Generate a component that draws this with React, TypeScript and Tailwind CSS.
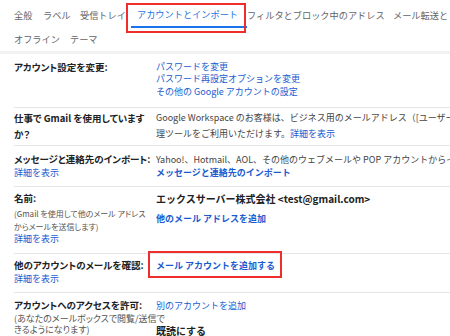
import React from "react";

const link = "text-[#1a5bd0]";
const palt = "[font-feature-settings:'palt']";

function Row({
  h,
  children,
  last,
}: {
  h: string;
  children: React.ReactNode;
  last?: boolean;
}) {
  return (
    <div className={`flex ${h} ${last ? "" : "border-b border-[#e6e6e6]"}`}>
      {children}
    </div>
  );
}

export default function App() {
  return (
    <div className="w-[450px] h-[336px] overflow-hidden bg-white font-['Noto_Sans_CJK_JP',sans-serif] text-[#202124]">
      {/* Tabs row 1 */}
      <div className="flex h-[28px] pl-[14px] text-[9.2px] text-[#5f6368] whitespace-nowrap">
        <div className="w-[29px] shrink-0 flex items-center pt-[4px]">全般</div>
        <div className="w-[37px] shrink-0 flex items-center pt-[4px]">ラベル</div>
        <div className="w-[51px] shrink-0 flex items-center pt-[4px]">受信トレイ</div>
        <div className="relative w-[116px] shrink-0 flex items-center pt-[4px] pl-[6px] border-b-2 border-[#1a73e8] text-[#1a73e8]">
          アカウントとインポート
          <div className="absolute left-[-5px] top-[3px] w-[120px] h-[30px] border-2 border-[#ee2d2d]" />
        </div>
        <div className="w-[146px] shrink-0 flex items-center pt-[4px]">フィルタとブロック中のアドレス</div>
        <div className="shrink-0 flex items-center pt-[4px]">メール転送と POP/IMAP</div>
      </div>
      {/* Tabs row 2 */}
      <div className="flex h-[23px] pl-[14px] items-center text-[9.2px] text-[#5f6368] whitespace-nowrap">
        <div className="w-[56px] shrink-0">オフライン</div>
        <div>テーマ</div>
      </div>
      <div className="h-[3px] bg-[#f2f2f2]" />

      {/* Settings */}
      <div className="ml-[14px] text-[9px]">
        <Row h="h-[54px]">
          <div className={`w-[142px] shrink-0 pt-[6.5px] leading-[13px] font-bold text-[9.5px] ${palt}`}>
            アカウント設定を変更:
          </div>
          <div className={`flex-1 min-w-0 pt-[6.5px] leading-[12.5px] ${link}`}>
            <div>パスワードを変更</div>
            <div>パスワード再設定オプションを変更</div>
            <div>その他の Google アカウントの設定</div>
          </div>
        </Row>
        <Row h="h-[38px]">
          <div className={`w-[142px] shrink-0 pt-[2px] leading-[16px] font-bold text-[9.5px] ${palt}`}>
            仕事で Gmail を使用していますか？
          </div>
          <div className="flex-1 min-w-0 pt-[2px] leading-[16px] text-[#444] whitespace-nowrap overflow-hidden">
            <div>
              Google Workspace のお客様は、ビジネス用のメールアドレス（[ユーザー名]@[ドメイン名]）、大容量のストレージ、管
            </div>
            <div>
              理ツールをご利用いただけます。<span className={link}>詳細を表示</span>
            </div>
          </div>
        </Row>
        <Row h="h-[41px]">
          <div className="w-[142px] shrink-0 pt-[6.5px] leading-[13px]">
            <div className={`font-bold whitespace-nowrap text-[9.5px] ${palt}`}>メッセージと連絡先のインポート:</div>
            <div className={link}>詳細を表示</div>
          </div>
          <div className="flex-1 min-w-0 pt-[6.5px] leading-[13px] text-[#444] whitespace-nowrap overflow-hidden">
            <div>Yahoo!、Hotmail、AOL、その他のウェブメールや POP アカウントからインポートします。</div>
            <div className={`font-bold ${link}`}>メッセージと連絡先のインポート</div>
          </div>
        </Row>
        <Row h="h-[67px]">
          <div className="w-[142px] shrink-0 pt-[4.5px]">
            <div className={`font-bold leading-[13px] text-[9.5px] ${palt}`}>名前:</div>
            <div className={`mt-[2px] text-[8px] leading-[13px] text-[#555] whitespace-nowrap ${palt}`}>
              (Gmail を使用して他のメール アドレス
              <br />
              からメールを送信します)
            </div>
            <div className={`leading-[12px] ${link}`}>詳細を表示</div>
          </div>
          <div className="flex-1 min-w-0 pt-[4.5px] whitespace-nowrap overflow-hidden">
            <div className="font-bold leading-[13px] text-[10px] text-[#202124]">
              エックスサーバー株式会社 &lt;test@gmail.com&gt;
            </div>
            <div className={`mt-[7px] font-bold leading-[13px] ${link}`}>
              他のメール アドレスを追加
            </div>
          </div>
        </Row>
        <Row h="h-[39px]">
          <div className="w-[142px] shrink-0 pt-[4.5px] leading-[13px]">
            <div className={`font-bold whitespace-nowrap text-[9.5px] ${palt}`}>他のアカウントのメールを確認:</div>
            <div className={link}>詳細を表示</div>
          </div>
          <div className="flex-1 min-w-0 pt-[4.5px] leading-[13px]">
            <span className={`relative font-bold ${link}`}>
              メール アカウントを追加する
              <span className="absolute left-[-8px] top-[-7.5px] w-[134px] h-[27px] border-2 border-[#ee2d2d]" />
            </span>
          </div>
        </Row>
        <Row h="h-[43px]" last>
          <div className="w-[142px] shrink-0 pt-[5.5px]">
            <div className={`font-bold leading-[13px] whitespace-nowrap text-[9.5px] ${palt}`}>アカウントへのアクセスを許可:</div>
            <div className={`mt-[1px] text-[9px] leading-[11.5px] text-[#555] whitespace-nowrap ${palt}`}>
              (あなたのメールボックスで閲覧/送信で
              <br />
              きるようになります)
            </div>
          </div>
          <div className="flex-1 min-w-0 pt-[5.5px] whitespace-nowrap">
            <div className={`leading-[13px] ${link}`}>別のアカウントを追加</div>
            <div className="mt-[12px] leading-[13px] font-bold text-[10px] text-[#202124]">既読にする</div>
          </div>
        </Row>
      </div>
    </div>
  );
}
